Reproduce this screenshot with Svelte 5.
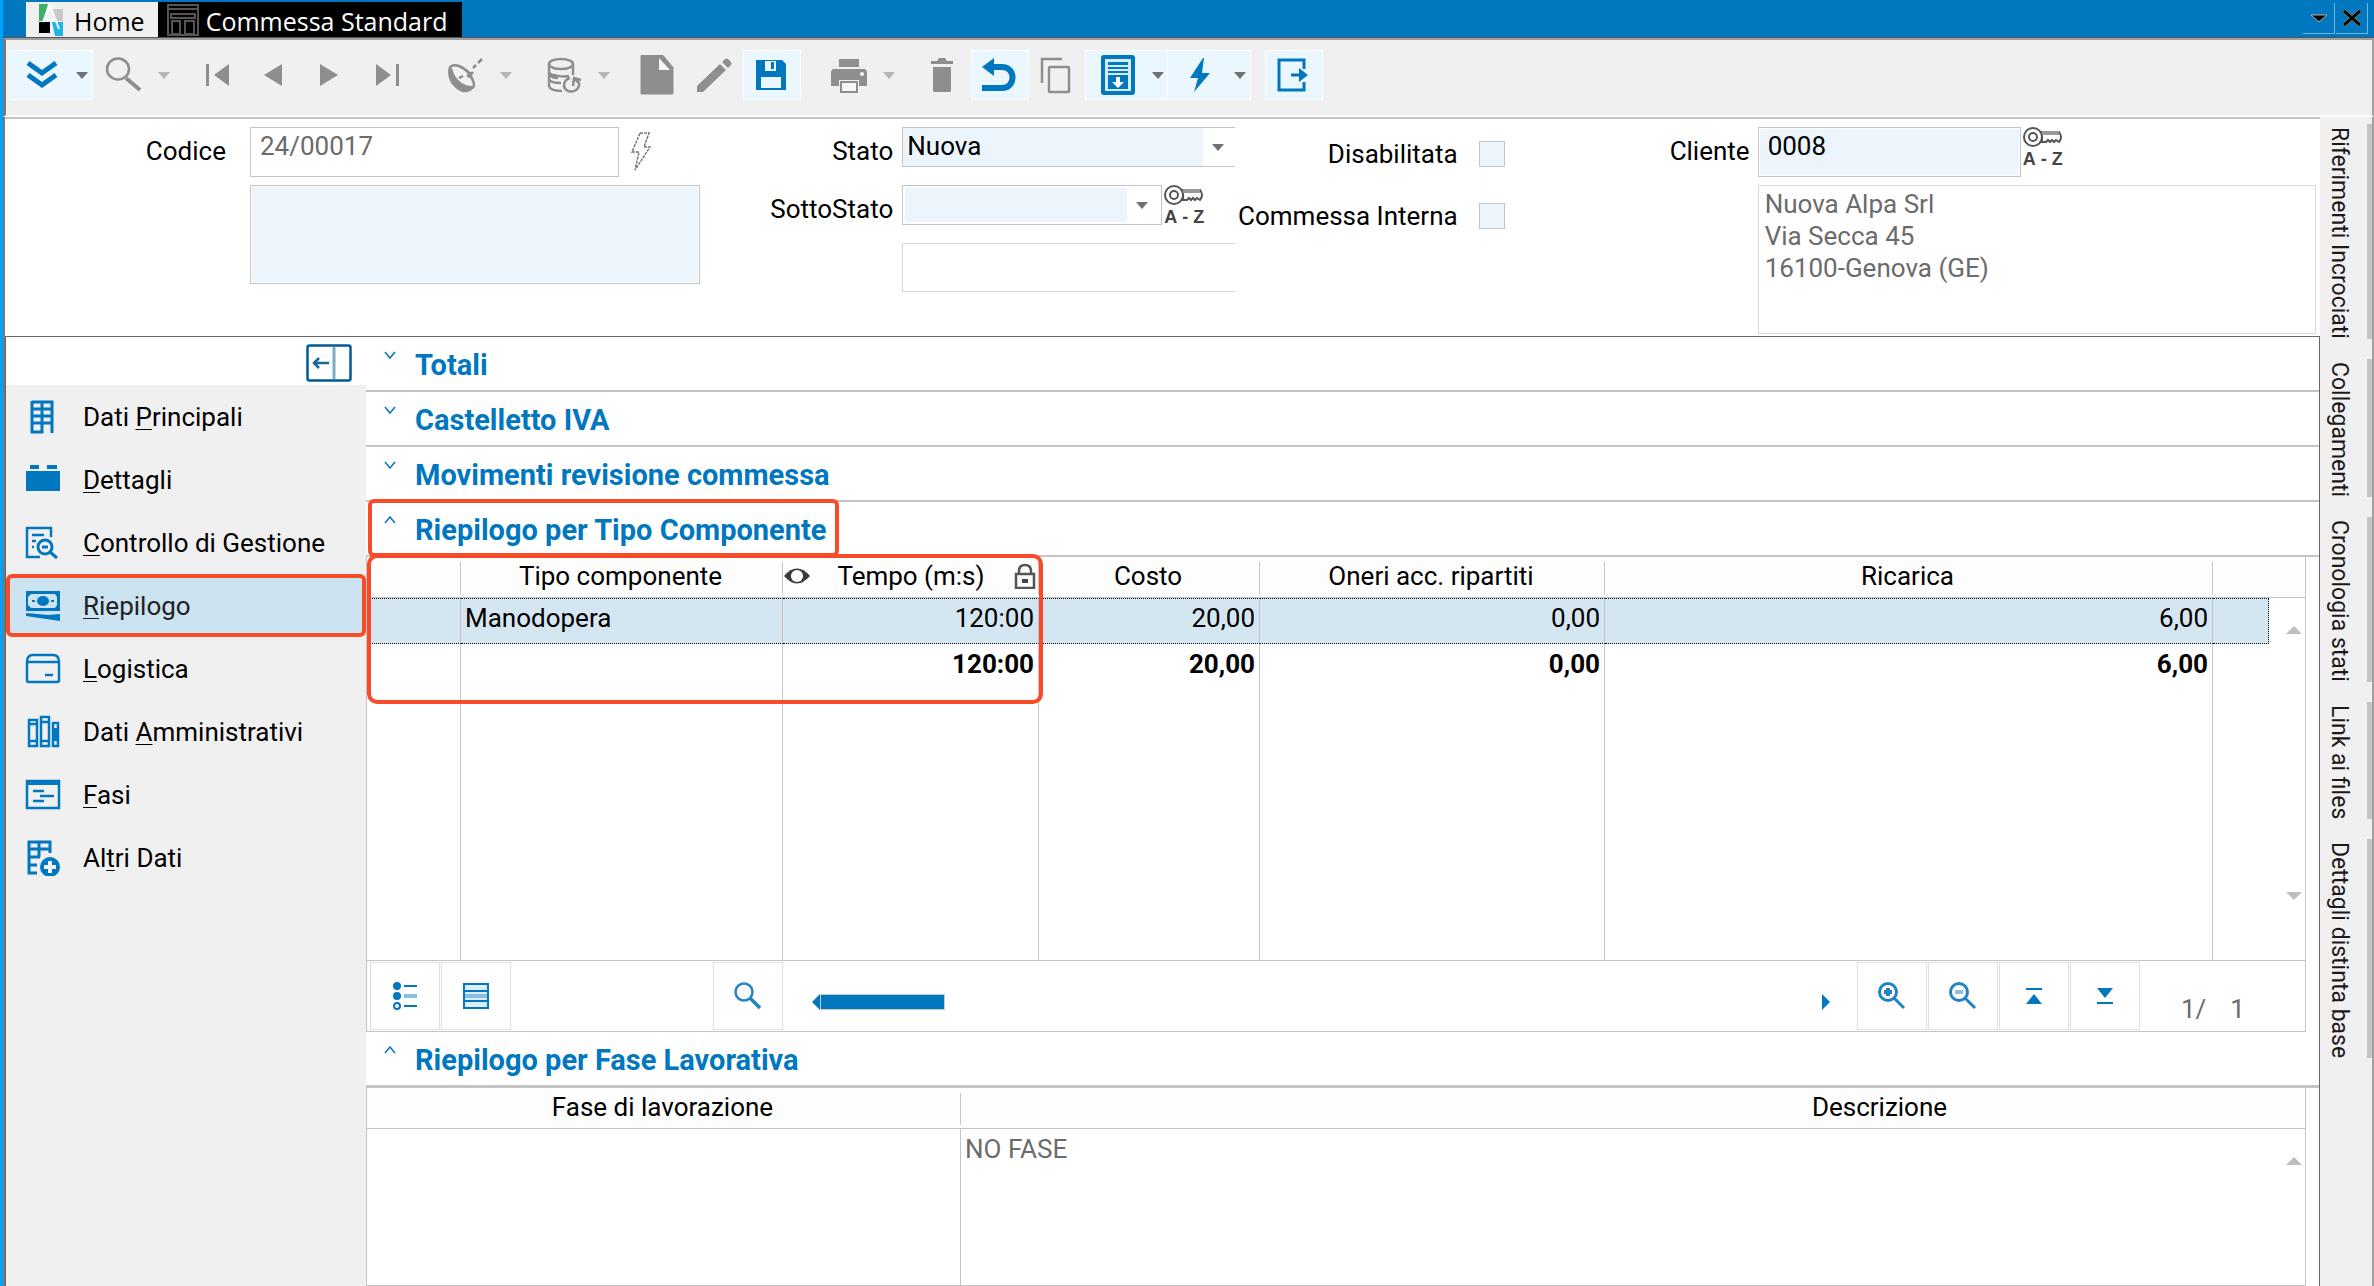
<script>
  const icons = {
    chevrons: '<g fill="none" stroke="#0077be" stroke-width="5"><path d="M6 8l14 10L34 8M6 20l14 10L34 20"/></g>',
    search: '<g fill="none" stroke="#8e8e8e" stroke-width="2.500"><ellipse cx="14" cy="14" rx="11" ry="10.500"/><path d="M22 23l14 12" stroke-width="4"/></g>',
    first: '<g fill="#8e8e8e"><path d="M9 9h3v22H9zM32 9v22L17 20z"/></g>',
    prev: '<path fill="#8e8e8e" d="M28 9v22L10 20z"/>',
    next: '<path fill="#8e8e8e" d="M9 9v22l18-11z"/>',
    last: '<g fill="#8e8e8e"><path d="M28 9h3v22h-3zM8 9v22l15-11z"/></g>',
    dish: '<g fill="none" stroke="#8e8e8e" stroke-width="2.500"><path fill="#8e8e8e" stroke="none" d="M3 11c-3 9 1 21 13 26 6 1 11-1 12-6-9 1-19-5-22-18z"/><path d="M4 12c5-4 15 0 20 8 4 6 5 10 3 13"/><path d="M13 23l4-2M20 15l3 3 3 0-2 4-3-2M27 13l3-3M32 8l4-4"/></g>',
    database: '<g fill="none" stroke="#8e8e8e" stroke-width="2.500"><ellipse cx="17" cy="9" rx="12" ry="5"/><path d="M5 9v22c1 4 7 5 13 5M29 9v11M5 17c1 4 16 5 20 4M5 24c1 4 8 4 12 4M5 19c2 3 5 4 9 4"/><path d="M26 23c-7 2-8 10-2 13 6 2 12-2 11-8l-4-4M29 31l1-8 7 2"/></g>',
    page: '<path fill="#8e8e8e" stroke="#8e8e8e" stroke-linejoin="round" stroke-width="3" d="M5 1h20l10 12v25H5z"/><path fill="#f6f6f6" d="M22 3v12h11z"/>',
    pencil: '<g fill="#8e8e8e"><path d="M3 37v-6L26 9l6 6L9 37zM28 7l3-3q1-1 3 0l3 3q1 2 0 3l-3 3z"/></g>',
    save: '<path fill="#0077be" d="M5 5h26l4 4v26H5z"/><path fill="#eaf7ff" d="M14 6h11v10H14zM10 22h20v11H10z"/><path fill="#0077be" d="M20 7h3v7h-3z"/>',
    print: '<g fill="#8e8e8e"><path d="M10 4h20v8H10zM5 14h30q3 0 3 4v13h-8v-6H10v6H2V18q0-4 3-4z"/><path fill="#f6f6f6" stroke="#8e8e8e" stroke-width="2" d="M12 27h16v10H12z"/><circle cx="33" cy="19" r="2" fill="#f6f6f6"/></g>',
    trash: '<g fill="#8e8e8e"><path d="M9 6h6l2-3h6l2 3h6v3H9zM11 12h18v24q0 1-2 1H13q-2 0-2-1z"/></g>',
    undo: '<path fill="none" stroke="#0077be" stroke-width="6" d="M3 33h20c14 0 14-21 0-21H12"/><path fill="#0077be" d="M15 3v18L3 12z"/>',
    copy: '<g fill="none" stroke="#8e8e8e" stroke-width="2.500"><path d="M6 28V4h20"/><rect x="13" y="12" width="20" height="25" rx="1"/></g>',
    report: '<rect x="3" y="0" width="34" height="40" rx="3" fill="#0077be"/><path fill="#d5ebf8" d="M7 4h26v32H7z"/><path fill="#0077be" d="M10 7h20v3H10zM10 12h20v2H10zM10 16h20v2H10zM10 20h20v14H10z"/><path fill="#fff" d="M18 22h4v5h4l-6 6-6-6h4z"/>',
    bolt: '<path fill="#0077be" d="M23 3L10 23h8l-4 14 16-19h-8l2-15z"/>',
    exit: '<g fill="none" stroke="#0077be" stroke-width="3"><path d="M31 14V5H6v30h25v-8"/><path d="M18 20h12" /></g><path fill="#0077be" d="M26 13l9 7-9 7z"/>'
  };

  const tools = [
    { icon: 'chevrons', label: 'Menu', on: true, arrow: true },
    { icon: 'search', label: 'Cerca', arrow: true },
    { icon: 'first', label: 'Primo', space: true },
    { icon: 'prev', label: 'Precedente' },
    { icon: 'next', label: 'Successivo' },
    { icon: 'last', label: 'Ultimo' },
    { icon: 'dish', label: 'Aggiorna', arrow: true, space: true },
    { icon: 'database', label: 'Archivio', arrow: true, space: true },
    { icon: 'page', label: 'Nuovo', space: true },
    { icon: 'pencil', label: 'Modifica' },
    { icon: 'save', label: 'Salva', on: true },
    { icon: 'print', label: 'Stampa', arrow: true, space: true },
    { icon: 'trash', label: 'Elimina', space: true },
    { icon: 'undo', label: 'Annulla', on: true },
    { icon: 'copy', label: 'Copia' },
    { icon: 'report', label: 'Report', on: true, arrow: true },
    { icon: 'bolt', label: 'Azioni', on: true, arrow: true },
    { icon: 'exit', label: 'Esci', on: true, space: true }
  ];

  const nav = [
    { a: 'Dati ', k: 'P', b: 'rincipali', icon: '<g fill="none" stroke="#0077be" stroke-width="3"><path d="M7 3h20v31M7 2v31h10V3M7 10h20M7 17h20M7 24h20"/></g>' },
    { a: '', k: 'D', b: 'ettagli', icon: '<g fill="#0077be"><path d="M1 9h34v20H1zM5 3h9v4H5zM22 3h10v4H22z"/></g>' },
    { a: '', k: 'C', b: 'ontrollo di Gestione', icon: '<g fill="none" stroke="#0077be" stroke-width="2.500"><path d="M26 12V3H2v29h13M7 10h12M7 16h4M7 22h2"/><circle cx="20" cy="22" r="7" stroke-width="3"/><path d="M17 22h6M25 27l7 6" stroke-width="3"/></g>' },
    { a: '', k: 'R', b: 'iepilogo', active: true, icon: '<path fill="#0077be" d="M1 3h34v20H1z"/><path fill="#cce3f1" d="M6 6h24l2 3v8l-2 3H6l-3-3V9z"/><ellipse cx="18" cy="13" rx="6" ry="5" fill="#0077be"/><path fill="#0077be" d="M7 12h3v2H7zM26 12h3v2h-3zM1 25l22 2 12-1v7L1 28z"/>' },
    { a: '', k: 'L', b: 'ogistica', icon: '<g fill="none" stroke="#0077be" stroke-width="2.500"><path d="M2 12v17q0 2 2 2h28q2 0 2-2V12M2 11q0-7 6-7h20q6 0 6 7zM20 24h8"/></g>' },
    { a: 'Dati ', k: 'A', b: 'mministrativi', icon: '<g fill="none" stroke="#0077be" stroke-width="2.500"><path d="M4 6h8v26H4zM16 3h8v29h-8zM4 10h8M4 27h8M16 8h8M16 27h8M28 9h5v23h-5z"/></g><path fill="#0077be" d="M27 14h7v13h-7z"/>' },
    { a: '', k: 'F', b: 'asi', icon: '<g fill="none" stroke="#0077be" stroke-width="2.500"><path d="M2 4h32v27H2zM8 14h11M15 19h14M8 24h11"/></g><path fill="#0077be" d="M1 3h34v5H1z"/>' },
    { a: 'Al', k: 't', b: 'ri Dati', icon: '<g fill="none" stroke="#0077be" stroke-width="3"><path d="M25 13V2H4v31h8M4 9h21M14 2v15M4 17h11M4 25h8"/></g><circle cx="25" cy="27" r="10" fill="#0077be"/><path fill="#f0f0f0" d="M23 21h4v4h4v4h-4v4h-4v-4h-4v-4h4z"/>' }
  ];

  const sideTabs = ['Riferimenti Incrociati', 'Collegamenti', 'Cronologia stati', 'Link ai files', 'Dettagli distinta base'];
  const closed = ['Totali', 'Castelletto IVA', 'Movimenti revisione commessa'];
</script>

{#snippet chevron(up)}
  <svg class="chev" width="12" height="8" viewBox="0 0 12 8"><path d={up ? 'M1 7l5-6 5 6' : 'M1 1l5 6 5-6'} fill="none" stroke="#0077be" stroke-width="1.5" /></svg>
{/snippet}

{#snippet key()}
  <button type="button" class="key" aria-label="Cerca in elenco">
    <svg width="40" height="22" viewBox="0 0 40 22">
      <g fill="none" stroke="#555" stroke-width="2"><circle cx="10" cy="10" r="9" /><circle cx="10" cy="10" r="4" /><path d="M19 5h17q4 5 0 10l-3-2-2 2-2-2-2 2-2-2-2 2h-4z" /></g>
      <path d="M19 4h17v4H19z" fill="#999" />
    </svg>
    <span class="az"><b>A</b><b>-</b><b>Z</b></span>
  </button>
{/snippet}

<div class="window">
  <header class="titlebar">
    <div class="tabs">
      <button class="tab home">
        <svg width="24" height="32" viewBox="0 0 24 32"><path fill="#3cb06a" d="M0 0h9L4 17H0z" /><path fill="#c9c9c9" d="M12 5h12v12h-7z" /><path fill="#000" d="M0 18h11v11H0z" /><path fill="#1fb4e8" d="M13 18h11v14H16z" /><path fill="none" stroke="#fff" stroke-width="2" d="M4 18L11 1l9 24M6 16h12" /></svg>
        <span>Home</span>
      </button>
      <button class="tab current">
        <svg width="32" height="32" viewBox="0 0 32 32"><g fill="none" stroke="#555" stroke-width="2"><path d="M1 1h30v30H1zM1 5h30M4 10h24v4H4zM5 17h8v13H5zM18 17h9v13h-9z" /></g></svg>
        <span>Commessa Standard</span>
      </button>
    </div>
    <div class="winbuttons">
      <button aria-label="Elenco schede"><svg width="18" height="10" viewBox="0 0 18 10"><path d="M1 2h16L9 9z" stroke="#b9b09a" fill="#000" /></svg></button>
      <button aria-label="Chiudi"><svg width="20" height="18" viewBox="0 0 20 18"><path d="M2 2l16 14M18 2L2 16" stroke="#b9b09a" stroke-width="4" /><path d="M2 2l16 14M18 2L2 16" stroke="#000" stroke-width="3" /></svg></button>
    </div>
  </header>

  <div class="toolbar" role="toolbar" aria-label="Comandi">
    {#each tools as t}
      <button class="tool" class:on={t.on} class:wide={t.arrow} class:space={t.space} aria-label={t.label}>
        <svg width="40" height="40" viewBox="0 0 40 40">{@html icons[t.icon]}</svg>
        {#if t.arrow}<span class="caret"></span>{/if}
      </button>
    {/each}
  </div>

  <div class="body">
    <div class="page">
      <form class="form">
        <div class="group g1">
          <label for="codice">Codice</label>
          <div class="line">
            <input id="codice" class="box gray" value="24/00017" readonly />
            <button type="button" class="plain" aria-label="Genera codice"><svg width="20" height="40" viewBox="0 0 20 40"><path d="M9 1h9l-5 14h6L4 38l4-18H1z" fill="none" stroke="#777" stroke-width="1.500" stroke-dasharray="3 1" /></svg></button>
          </div>
          <textarea class="desc" aria-label="Descrizione"></textarea>
        </div>
        <div class="group g2">
          <label for="stato">Stato</label>
          <div class="combo open"><select id="stato"><option>Nuova</option></select><span class="caret"></span></div>
          <label for="sotto">SottoStato</label>
          <div class="line tight">
            <div class="combo small"><select id="sotto"><option></option></select><span class="caret"></span></div>
            {@render key()}
          </div>
          <input class="extra" aria-label="Descrizione sottostato" readonly />
        </div>
        <div class="group g3">
          <label for="dis">Disabilitata</label><input id="dis" type="checkbox" />
          <label for="int">Commessa Interna</label><input id="int" type="checkbox" />
        </div>
        <div class="group g4">
          <label for="cliente">Cliente</label>
          <div class="line tight"><input id="cliente" class="box blue" value="0008" />{@render key()}</div>
          <textarea class="address" aria-label="Indirizzo cliente" readonly value={'Nuova Alpa Srl\nVia Secca 45\n16100-Genova (GE)'}></textarea>
        </div>
      </form>

      <div class="content">
        <nav class="sidebar">
          <div class="collapse">
            <button class="plain" aria-label="Comprimi menu"><svg width="46" height="38" viewBox="0 0 46 38"><rect x="1.500" y="1.500" width="43" height="35" rx="2" fill="#fff" stroke="#005a96" stroke-width="2.500" /><path d="M28 3v32" stroke="#7fabc9" stroke-width="3" /><path d="M23 19H8M13 14l-5 5 5 5" fill="none" stroke="#1b669c" stroke-width="2.500" /></svg></button>
          </div>
          {#each nav as n}
            <a href="#{n.b}" class:active={n.active}>
              <svg width="36" height="36" viewBox="0 0 36 36">{@html n.icon}</svg>
              <span>{n.a}<u>{n.k}</u>{n.b}</span>
            </a>
          {/each}
        </nav>

        <main>
          {#each closed as title}
            <button class="section">{@render chevron(false)}<span>{title}</span></button>
          {/each}
          <button class="section">{@render chevron(true)}<span>Riepilogo per Tipo Componente</span><i class="mark title-mark"></i></button>

          <div class="grid">
            <table class="types">
              <colgroup><col class="c0" /><col class="c1" /><col class="c2" /><col class="c3" /><col class="c4" /><col class="c5" /><col class="c6" /><col class="c7" /></colgroup>
              <thead>
                <tr>
                  <th></th><th>Tipo componente</th>
                  <th>
                    <div class="icons">
                      <svg width="26" height="18" viewBox="0 0 28 18"><path d="M0 9Q14-7 28 9 14 25 0 9z" fill="#3c3c3c" /><circle cx="14" cy="9" r="6.500" fill="#fff" /></svg>
                      <span>Tempo (m:s)</span>
                      <svg width="22" height="26" viewBox="0 0 22 26"><path d="M2 11h18v14H2zM5 11V8q0-6 6-6t6 6v3" fill="none" stroke="#555" stroke-width="2.500" /><path d="M8 16h6v4H8z" fill="#444" /></svg>
                    </div>
                  </th>
                  <th>Costo</th><th>Oneri acc. ripartiti</th><th>Ricarica</th><th></th><th></th>
                </tr>
              </thead>
              <tbody>
                <tr class="selected">
                  <td></td><td>Manodopera</td><td class="n">120:00</td><td class="n">20,00</td><td class="n">0,00</td><td class="n">6,00</td><td class="end"></td>
                  <td class="scroll"><button class="tri up" aria-label="Scorri su"></button></td>
                </tr>
                <tr class="total">
                  <td></td><td></td><td class="n">120:00</td><td class="n">20,00</td><td class="n">0,00</td><td class="n">6,00</td><td></td><td class="scroll"></td>
                </tr>
                <tr class="filler">
                  <td></td><td></td><td></td><td></td><td></td><td></td><td></td>
                  <td class="scroll"><button class="tri down" aria-label="Scorri giù"></button></td>
                </tr>
              </tbody>
            </table>
            <i class="mark table-mark"></i>
            <div class="footer">
              <button class="fb" aria-label="Elenco"><svg width="26" height="30" viewBox="0 0 26 30"><g fill="#0077be"><circle cx="5" cy="5" r="4" /><circle cx="5" cy="15" r="4" /><path d="M12 4h13v2H12zM12 24h13v2H12z" /><path d="M12 13h13v4H12z" fill="#8abfe0" /></g><circle cx="5" cy="25" r="3" fill="none" stroke="#0077be" stroke-width="2" /></svg></button>
              <button class="fb" aria-label="Tabella"><svg width="26" height="26" viewBox="0 0 26 26"><path fill="#dcebf5" d="M1 1h24v24H1z" /><path fill="#8abfe0" d="M1 11h24v4H1z" /><path fill="none" stroke="#0077be" stroke-width="2" d="M1 1h24v24H1zM1 8h24M1 18h24" /></svg></button>
              <button class="fb find" aria-label="Trova"><svg width="28" height="28" viewBox="0 0 28 28"><g fill="none" stroke="#2283c4" stroke-width="2.500"><circle cx="10" cy="10" r="8.500" /><path d="M16 16l10 10" stroke-width="3.500" /></g></svg></button>
              <div class="bar">
                <button class="left" aria-label="Scorri a sinistra"></button><span class="thumb"></span>
                <button class="right" aria-label="Scorri a destra"></button>
              </div>
              <button class="fb" aria-label="Ingrandisci"><svg width="28" height="28" viewBox="0 0 28 28"><g fill="none" stroke="#2283c4" stroke-width="3"><circle cx="10" cy="10" r="8.500" /><path d="M16 16l10 10" /></g><path fill="#2283c4" d="M8 6h4v2h2v4h-2v2H8v-2H6V8h2z" /></svg></button>
              <button class="fb" aria-label="Riduci"><svg width="28" height="28" viewBox="0 0 28 28"><g fill="none" stroke="#2283c4" stroke-width="3"><circle cx="10" cy="10" r="8.500" /><path d="M16 16l10 10" /></g><path fill="#8abfe0" d="M6 8h8v4H6z" /></svg></button>
              <button class="fb" aria-label="Inizio"><svg width="28" height="28" viewBox="0 0 28 28"><path fill="#0077be" d="M6 6h16v2H6zM14 12l8 10H6z" /></svg></button>
              <button class="fb" aria-label="Fine"><svg width="28" height="28" viewBox="0 0 28 28"><path fill="#0077be" d="M6 20h16v2H6zM6 6h16l-8 10z" /></svg></button>
              <div class="count"><span>1/</span><span>1</span></div>
            </div>
          </div>

          <button class="section thick">{@render chevron(true)}<span>Riepilogo per Fase Lavorativa</span></button>
          <div class="grid grow">
            <table class="phases">
              <colgroup><col class="p0" /><col /><col class="c7" /></colgroup>
              <thead><tr><th>Fase di lavorazione</th><th class="descr">Descrizione</th><th></th></tr></thead>
              <tbody><tr><td></td><td class="nofase">NO FASE</td><td class="scroll"><button class="tri up" aria-label="Scorri su"></button></td></tr></tbody>
            </table>
          </div>
        </main>
      </div>
    </div>

    <aside class="sidetabs">
      {#each sideTabs as s}<button>{s}</button>{/each}
    </aside>
  </div>
</div>

<style>
  :global(body) { margin: 0; background: #f0f0f0; }
  .window, .window * { box-sizing: border-box; }
  .window {
    min-height: 100vh; height: 100vh; overflow: hidden; display: flex; flex-direction: column;
    border-left: 3px solid #00a2ff; background: #f0f0f0; color: #000;
    font: 26px/32px Roboto, "Liberation Sans", sans-serif;
  }
  button { font: inherit; color: inherit; border: 0; background: none; padding: 0; margin: 0; text-align: left; }
  input, select, textarea { font: inherit; color: inherit; margin: 0; border-radius: 0; outline: 0; }
  svg { display: block; flex: none; }

  .titlebar { display: flex; justify-content: space-between; height: 38px; flex: none; background: #0077be; border-bottom: 1px solid #555; padding-left: 23px; }
  .tabs { display: flex; padding-top: 2px; }
  .tab { display: flex; align-items: center; font: 25px/34px "Open Sans", "Noto Sans", sans-serif; white-space: nowrap; }
  .tab span { padding-top: 2px; }
  .home { background: #f0f0f0; padding: 0 13px; gap: 11px; }
  .current { background: #000; color: #fff; padding: 0 14px 0 9px; gap: 7px; }
  .winbuttons { display: flex; padding: 3px 6px 3px 0; gap: 1px; }
  .winbuttons button { width: 32px; display: flex; align-items: center; justify-content: center; border-right: 1px solid #6fb7e2; border-bottom: 1px solid #6fb7e2; }

  .toolbar { display: flex; align-items: center; flex: none; height: 79px; padding: 0 0 5px 4px; border: 2px solid #a0a0a0; border-left: 3px solid #777; border-bottom: 2px solid #fafafa; }
  .tool { height: 48px; width: 56px; display: flex; align-items: center; padding-left: 7px; margin-right: 1px; flex: none; }
  .tool.wide { width: 82px; padding-left: 12px; gap: 14px; margin-right: 0; }
  .tool.space { margin-left: 16px; }
  .tool.on { background: #eaf7ff; outline: 1px solid #fff; }
  .caret { width: 0; height: 0; border: 6px solid transparent; border-top: 7px solid #b5b5b5; border-bottom: 0; }
  .on .caret, .combo .caret { border-top-color: #707070; }

  .body { flex: 1; display: flex; min-height: 0; border-right: 2px solid #a0a0a0; border-left: 2px solid #777; }
  .page { flex: 1; min-width: 0; display: flex; flex-direction: column; background: #fff; border-top: 2px solid #c4c4c4; }

  .form { display: grid; grid-template-columns: 704fr 525fr 280fr 805fr; padding-top: 8px; height: 217px; flex: none; }
  .group { display: grid; align-content: start; align-items: start; }
  .group label { text-align: right; padding-top: 8px; white-space: nowrap; }
  .line { display: flex; gap: 12px; }
  .tight { gap: 2px; }
  .plain, .key { flex: none; }
  .g1 { grid-template-columns: 221px 450px; column-gap: 24px; row-gap: 8px; }
  .g1 .desc { grid-column: 2; height: 99px; background: #ecf4fc; border: 1px solid #c4c4c4; box-shadow: inset 0 0 0 1px #fff; resize: none; }
  .box { height: 50px; padding: 2px 9px 14px; border: 1px solid #c4c4c4; }
  .g1 .box { width: 369px; }
  .gray { color: #6b6b6b; background: #fff; }
  .blue { background: #ecf4fc; width: 263px; box-shadow: inset 0 0 0 1px #fff; }
  .g2 { grid-template-columns: 184px 1fr; column-gap: 9px; row-gap: 18px; }
  .combo { position: relative; height: 40px; }
  .combo select { appearance: none; width: 100%; height: 40px; padding: 0 4px 2px; border: 1px solid #c4c4c4; background: linear-gradient(to left, #fff 32px, #ecf4fc 32px); }
  .combo .caret { position: absolute; right: 11px; top: 17px; pointer-events: none; }
  .open select { border-right: 0; }
  .small { width: 260px; }
  .small select { background: linear-gradient(to left, #fff 34px, #ecf4fc 34px); box-shadow: inset 0 0 0 2px #fff; }
  .small .caret { right: 14px; }
  .extra { grid-column: 2; width: 100%; height: 49px; border: 1px solid #d9d9d9; border-right: 0; background: #fff; }
  .key { width: 40px; height: 40px; }
  .az { display: flex; justify-content: space-between; font: 18px/20px "Liberation Sans", sans-serif; color: #444; }
  .g3 { grid-template-columns: 1fr 26px; column-gap: 21px; row-gap: 19px; padding-right: 10px; }
  .g3 label { padding-top: 11px; margin-left: -40px; }
  .g3 input { appearance: none; width: 26px; height: 26px; margin-top: 14px; border: 1px solid #c4c4c4; background: #ecf4fc; }
  .g4 { grid-template-columns: 235px 1fr; column-gap: 8px; row-gap: 8px; padding-right: 4px; }
  .address { grid-column: 2; height: 149px; padding: 2px 6px; border: 1px solid #d9d9d9; color: #6b6b6b; resize: none; overflow: hidden; }

  .content { flex: 1; min-height: 0; display: flex; border: 1px solid #666; border-bottom: 0; }
  .sidebar { width: 360px; flex: none; background: #f0f0f0; }
  .collapse { background: #fff; height: 48px; display: flex; justify-content: flex-end; padding: 3px 14px 0 0; }
  .sidebar a { display: flex; align-items: center; gap: 22px; height: 63px; padding-left: 19px; color: #000; text-decoration: none; white-space: nowrap; }
  .sidebar a.active { background: #cce3f1; border: 4px solid #f84b28; border-radius: 6px; padding-left: 15px; color: #222; }
  u { text-decoration-thickness: 1px; text-underline-offset: 3px; }

  main { flex: 1; min-width: 0; display: flex; flex-direction: column; }
  .section { position: relative; display: flex; align-items: flex-start; gap: 19px; height: 55px; flex: none; padding: 11px 0 0 18px; border-bottom: 2px solid #c4c4c4; color: #0077be; font-size: 29px; font-weight: 700; line-height: 34px; }
  .chev { margin-top: 3px; }
  .thick { height: 56px; border-bottom-width: 3px; }
  .mark { position: absolute; border: 4px solid #f84b28; border-radius: 6px; pointer-events: none; z-index: 1; }
  .title-mark { left: 2px; top: -3px; width: 471px; height: 58px; }
  .table-mark { left: 0; top: -3px; width: 676px; height: 150px; border-radius: 10px; }

  .grid { position: relative; flex: none; margin-right: 13px; border: 1px solid #c4c4c4; border-top: 0; }
  .grow { flex: 1; display: flex; min-height: 0; }
  table { width: 100%; border-collapse: separate; border-spacing: 0; table-layout: fixed; }
  .c0 { width: 94px; } .c1 { width: 322px; } .c2 { width: 256px; } .c3 { width: 221px; } .c4 { width: 345px; }
  .c6 { width: 56px; } .c7 { width: 36px; }
  th { height: 41px; padding: 3px 3px 5px 0; font-weight: 400; background: #fdfdfd linear-gradient(#c4c4c4, #c4c4c4) no-repeat right 5px / 1px 32px; border-bottom: 1px solid #c4c4c4; }
  th:nth-last-child(-n+2) { background-image: none; }
  .icons { display: flex; align-items: center; padding-left: 1px; }
  .icons span { flex: 1; padding-right: 2px; }
  td { height: 46px; padding: 4px 4px 10px 4px; border-right: 1px solid #c4c4c4; vertical-align: top; }
  .n { text-align: right; }
  .selected td { background: #d4e6f2; border-top: 1px dotted #000; border-bottom: 1px dotted #000; padding-top: 3px; padding-bottom: 9px; }
  .selected .end { border-right: 1px dotted #000; }
  .total { font-weight: 700; }
  td:nth-last-child(2) { border-right: 0; }
  td.scroll, .selected td.scroll { background: none; border: 0; padding: 0 3px 10px 0; vertical-align: bottom; }
  .filler td { height: 270px; }
  .filler td.scroll { padding-bottom: 60px; }
  .tri { display: block; margin-left: auto; width: 0; height: 0; border: 8px solid transparent; }
  .up { border-top: 0; border-bottom-color: #bdbdbd; }
  .down { border-bottom: 0; border-top-color: #bdbdbd; }

  .footer { display: flex; align-items: center; height: 71px; border-top: 1px solid #c4c4c4; padding-left: 3px; }
  .fb { width: 70px; height: 68px; margin-right: 1px; flex: none; display: flex; align-items: center; justify-content: center; border: 1px solid #e0e0e0; }
  .find { margin-left: 201px; }
  .bar { flex: 1; display: flex; align-items: center; padding: 12px 27px 0 28px; }
  .left, .right { width: 0; height: 0; border: 8px solid transparent; }
  .left { border-left: 0; border-right-color: #0077be; }
  .right { border-right: 0; border-left-color: #0077be; margin-left: auto; }
  .thumb { width: 125px; height: 16px; background: #0077be; border: 1px solid #ccc; }
  .count { width: 164px; display: flex; gap: 24px; padding: 25px 0 0 40px; color: #6b6b6b; }

  .p0 { width: 594px; }
  .phases th.descr { padding-left: 532px; background-image: none; }
  .phases th:first-child { background-image: linear-gradient(#c4c4c4, #c4c4c4); }
  .phases td:first-child { border-right: 1px solid #c4c4c4; }
  .phases .nofase { color: #6b6b6b; padding-top: 4px; }
  .phases td.scroll { vertical-align: top; padding-top: 28px; }
  .phases { height: 100%; }

  .sidetabs { width: 52px; flex: none; display: flex; flex-direction: column; gap: 20px; padding-top: 7px; }
  .sidetabs button { writing-mode: vertical-rl; font-size: 23px; line-height: 28px; width: 52px; padding: 3px 14px 0 5px; border-right: 5px solid #c4c4c4; color: #1a1a1a; white-space: nowrap; }
</style>
